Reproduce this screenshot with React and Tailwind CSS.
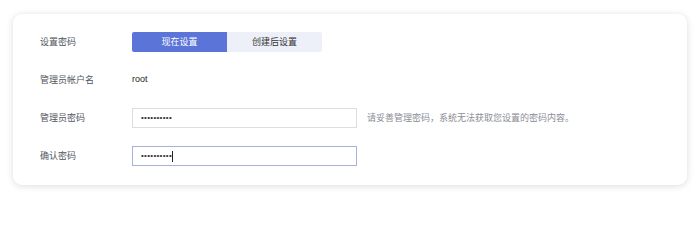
const font = { fontFamily: '"Noto Sans CJK SC", "Liberation Sans", sans-serif' };

const Row = ({ label, children }) => (
  <div className="flex h-[20px] items-center">
    <div className="w-[92px] text-[9px] text-[#50545e]">{label}</div>
    {children}
  </div>
);

const PasswordField = ({ focused }) => (
  <div
    className={`flex h-[20px] w-[225px] items-center border bg-white pl-[8px] ${
      focused ? 'border-[#a9b1da]' : 'border-[#dcdde3]'
    }`}
  >
    <span
      className="text-[8px] leading-none tracking-[0.3px] text-[#333]"
      style={{ fontFamily: '"Liberation Sans", sans-serif' }}
    >
      ••••••••••
    </span>
    {focused && <span className="h-[11px] w-[1px] bg-[#222]" />}
  </div>
);

export default function App() {
  return (
    <div className="h-[200px] w-[700px] overflow-hidden bg-white pt-[14px] pl-[13px]" style={font}>
      <div className="h-[171px] w-[674px] rounded-[9px] bg-white pt-[18px] pl-[27px] shadow-[0_1px_7px_rgba(0,0,0,0.14)]">
        <div className="flex flex-col gap-[18px]">
          <Row label="设置密码">
            <div className="flex h-[20px] text-[9px]">
              <button className="w-[95px] rounded-l-[2px] bg-[#5b74d8] text-white">现在设置</button>
              <button className="w-[95px] rounded-r-[2px] bg-[#eef0f9] text-[#333]">创建后设置</button>
            </div>
          </Row>
          <Row label="管理员帐户名">
            <span className="text-[9px] text-[#222]" style={{ fontFamily: '"Liberation Sans", sans-serif' }}>root</span>
          </Row>
          <Row label="管理员密码">
            <PasswordField />
            <span className="ml-[10px] text-[9px] text-[#8a8d96]">请妥善管理密码，系统无法获取您设置的密码内容。</span>
          </Row>
          <Row label="确认密码">
            <PasswordField focused />
          </Row>
        </div>
      </div>
    </div>
  );
}
